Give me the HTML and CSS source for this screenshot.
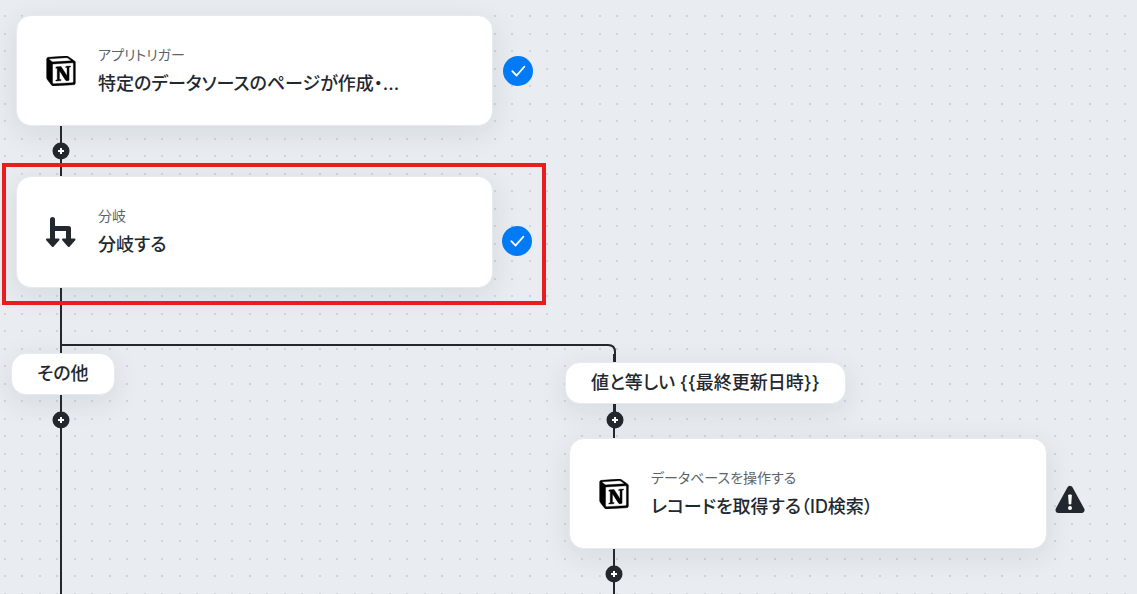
FILE: index.html
```html
<!DOCTYPE html>
<html lang="ja">
<head>
  <meta charset="utf-8">
  <title>フロー</title>
  <link rel="stylesheet" href="styles.css">
</head>
<body>

<!-- Shared icons -->
<svg class="sprite" aria-hidden="true">
  <symbol id="notion" viewBox="0 0 24 24">
    <path d="M4.459 4.208c.746.606 1.026.56 2.428.466l13.215-.793c.28 0 .047-.28-.046-.326L17.86 1.968c-.42-.326-.981-.7-2.055-.607L3.01 2.295c-.466.046-.56.28-.374.466zm.793 3.08v13.904c0 .747.373 1.027 1.214.98l14.523-.84c.841-.046.935-.56.935-1.167V6.354c0-.606-.233-.933-.748-.887l-15.177.887c-.56.047-.747.327-.747.933zm14.337.745c.093.42 0 .84-.42.888l-.7.14v10.264c-.608.327-1.168.514-1.635.514-.748 0-.935-.234-1.495-.933l-4.577-7.186v6.952L12.21 19s0 .84-1.168.84l-3.222.186c-.093-.186 0-.653.327-.746l.84-.233V9.854L7.822 9.76c-.094-.42.14-1.026.793-1.073l3.456-.233 4.764 7.279v-6.44l-1.215-.139c-.093-.514.28-.887.747-.933zM1.936 1.035l13.31-.98c1.634-.14 2.055-.047 3.082.7l4.249 2.986c.7.513.934.653.934 1.213v16.378c0 1.026-.373 1.634-1.68 1.726l-15.458.934c-.98.047-1.448-.093-1.962-.747l-3.129-4.06c-.56-.747-.793-1.306-.793-1.96V2.667c0-.839.374-1.54 1.447-1.632z" stroke="#000" stroke-width=".3"/>
  </symbol>
  <symbol id="check" viewBox="0 0 30 30">
    <circle cx="15" cy="15" r="15" fill="#007af5"/>
    <path d="M9.3 15.2l4.3 4.3 7.8-8.800" fill="none" stroke="#fff" stroke-width="1.8" stroke-linecap="round" stroke-linejoin="round"/>
  </symbol>
  <symbol id="plus" viewBox="0 0 18 18">
    <circle cx="9" cy="9" r="8.500" fill="#23282e"/>
    <path d="M9 6v6M6 9h6" stroke="#fff" stroke-width="2"/>
  </symbol>
</svg>

<main class="canvas">
  <svg class="lines" aria-hidden="true">
    <path d="M61 120V1200"/>
    <path d="M61 345H608Q615 345 615 352V360"/>
    <path class="thick" d="M614.500 354V412"/>
    <path d="M614 412V1200"/>
  </svg>

  <section class="card card-trigger">
    <svg class="icon"><use href="#notion"/></svg>
    <div class="text">
      <p class="kind">アプリトリガー</p>
      <h2 class="title">特定のデータソースのページが作成・...</h2>
    </div>
  </section>
  <svg class="status status-trigger" role="img" aria-label="OK"><use href="#check"/></svg>

  <button class="add add-1" aria-label="追加"><svg><use href="#plus"/></svg></button>

  <section class="card card-branch">
    <svg class="icon" viewBox="0 0 30 30">
      <path d="M6.500 2.500V22M6.500 11.500H22.500V22" fill="none" stroke="#23282e" stroke-width="5" stroke-linecap="round" stroke-linejoin="round"/>
      <path d="M1 22.500H12.500L6.750 29zM17 22.500H28.500L22.750 29z" fill="#23282e" stroke="#23282e" stroke-width="2" stroke-linejoin="round"/>
    </svg>
    <div class="text">
      <p class="kind">分岐</p>
      <h2 class="title">分岐する</h2>
    </div>
  </section>
  <svg class="status status-branch" role="img" aria-label="OK"><use href="#check"/></svg>
  <div class="highlight"></div>

  <div class="label label-other">その他</div>
  <button class="add add-2" aria-label="追加"><svg><use href="#plus"/></svg></button>

  <div class="label label-equal">値と等しい {{最終更新日時}}</div>
  <button class="add add-3" aria-label="追加"><svg><use href="#plus"/></svg></button>

  <section class="card card-record">
    <svg class="icon"><use href="#notion"/></svg>
    <div class="text">
      <p class="kind">データベースを操作する</p>
      <h2 class="title">レコードを取得する（ID検索）</h2>
    </div>
  </section>
  <svg class="status status-record" viewBox="0 0 30 30" role="img" aria-label="警告">
    <path d="M15 4L26.500 25H3.500z" fill="#23282e" stroke="#23282e" stroke-width="6" stroke-linejoin="round"/>
    <path d="M13.700 10h2.600l-.500 9h-1.600z" fill="#fff" stroke="#fff" stroke-width="1" stroke-linejoin="round"/>
    <circle cx="15" cy="23" r="2" fill="#fff"/>
  </svg>
  <button class="add add-4" aria-label="追加"><svg><use href="#plus"/></svg></button>
</main>

</body>
</html>
```
FILE: styles.css
```css
* {
  box-sizing: border-box;
}
body {
  margin: 0;
  font-family: Inter, "Noto Sans CJK JP", sans-serif;
  font-feature-settings: "palt";
  color: #23282e;
}
.sprite {
  position: absolute;
  width: 0;
  height: 0;
}
.canvas {
  position: relative;
  min-height: 100vh;
  overflow: hidden;
  background-color: #e9ecf1;
  background-image:
    radial-gradient(circle at 1px 1px, #d0d4da 1px, transparent 1px),
    radial-gradient(circle at 1px 1px, #d0d4da 1px, transparent 1px),
    radial-gradient(circle at 1px 1px, #d0d4da 1px, transparent 1px),
    radial-gradient(circle at 1px 1px, #d0d4da 1px, transparent 1px);
  background-size: 35px 35px;
  background-position: 4px 15px, 21px 15px, 4px 33px, 21px 33px;
}
.lines {
  position: absolute;
  left: 0;
  top: 0;
  width: 100%;
  height: 100%;
  fill: none;
  stroke: #23282e;
  stroke-width: 2;
}
.lines .thick {
  stroke-width: 3;
}

/* Nodes */
.card {
  position: absolute;
  display: flex;
  align-items: center;
  gap: 22px;
  width: 477px;
  padding: 26px 29px;
  background: #fff;
  border: 1px solid #e6eaee;
  border-radius: 15px;
  box-shadow: 0 7px 28px rgba(40, 65, 65, 0.1);
}
.card-trigger {
  left: 16px;
  top: 15px;
}
.card-branch {
  left: 16px;
  top: 176px;
  padding-bottom: 27px;
}
.card-record {
  left: 569px;
  top: 438px;
  width: 478px;
}
.icon {
  flex: none;
  width: 30px;
  height: 30px;
  overflow: visible;
}
.kind {
  margin: 0;
  font-size: 14px;
  line-height: 26px;
  color: #5c636b;
}
.title {
  margin: 0;
  font-size: 18px;
  font-weight: 500;
  line-height: 31px;
  white-space: nowrap;
}
.label {
  position: absolute;
  padding: 5px 25px;
  font-size: 18px;
  font-weight: 500;
  line-height: 30px;
  white-space: nowrap;
  background: #fff;
  border: 1px solid #e6eaee;
  border-radius: 15px;
  box-shadow: 0 7px 28px rgba(40, 65, 65, 0.1);
}
.label-other {
  left: 11px;
  top: 353px;
}
.label-equal {
  left: 565px;
  top: 362px;
}

/* Markers */
.status {
  position: absolute;
  width: 30px;
  height: 30px;
}
.status-trigger {
  left: 503px;
  top: 56px;
}
.status-branch {
  left: 502px;
  top: 226px;
}
.status-record {
  left: 1055px;
  top: 485px;
}
.add {
  position: absolute;
  width: 18px;
  height: 18px;
  padding: 0;
  border: 0;
  background: none;
  cursor: pointer;
}
.add svg {
  display: block;
  width: 18px;
  height: 18px;
}
.add-1 {
  left: 52px;
  top: 142px;
}
.add-2 {
  left: 52px;
  top: 411px;
}
.add-3 {
  left: 606px;
  top: 411px;
}
.add-4 {
  left: 605px;
  top: 565px;
}
.highlight {
  position: absolute;
  left: 2px;
  top: 163px;
  width: 544px;
  height: 142px;
  border: 4px solid #e81e1e;
  pointer-events: none;
}
```
